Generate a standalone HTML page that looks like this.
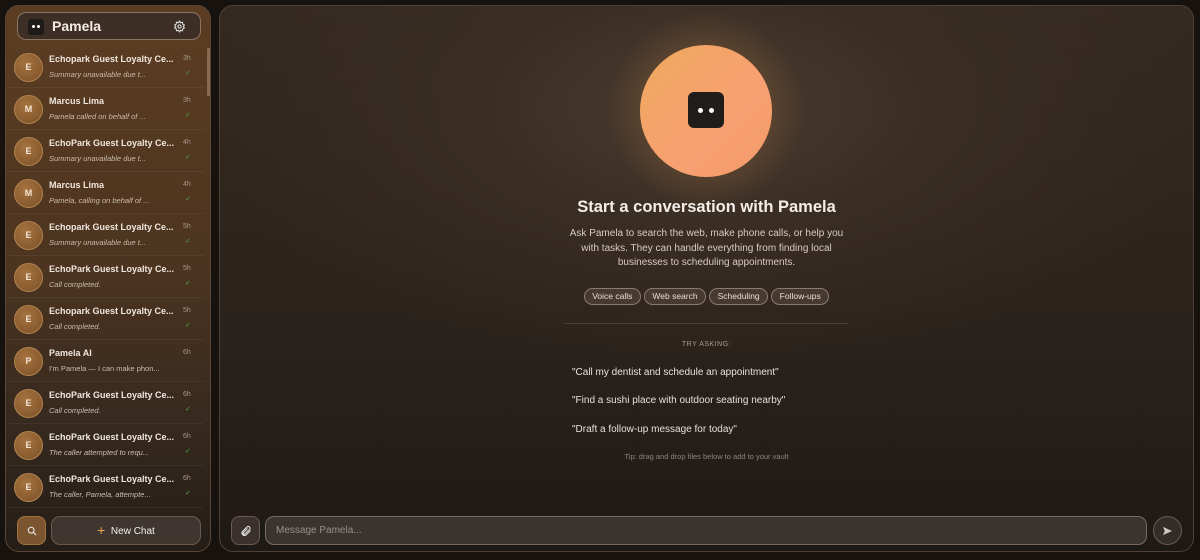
<!DOCTYPE html>
<html><head><style>
*{box-sizing:border-box;margin:0;padding:0}
body{width:1200px;height:560px;background:#17120e;font-family:"Liberation Sans",sans-serif;color:#eee;position:relative;overflow:hidden}
.side{position:absolute;left:5px;top:5px;width:206px;height:547px;border-radius:14px;border:1px solid #5a4636;background:linear-gradient(180deg,#5b3d22 0%,#4e3520 45%,#382a1f 75%,#241d18 100%);overflow:hidden}
.hdr{position:absolute;left:11px;top:6px;width:184px;height:28px;border-radius:9px;border:1px solid #8a7462;background:rgba(58,46,38,.9)}
.logo{position:absolute;left:10px;top:6px;width:16px;height:16px;border-radius:3px;background:#1e1b19}
.logo:before,.logo:after{content:"";position:absolute;top:6px;width:3px;height:3px;border-radius:50%;background:#fff}
.logo:before{left:4px}.logo:after{left:9px}
.hdr .t{position:absolute;left:34px;top:5px;font-weight:bold;font-size:14px;color:#f3ebe4}
.item{position:absolute;left:0;width:198px;height:42px;border-bottom:1px solid rgba(255,255,255,.05)}
.av{position:absolute;left:8px;top:7px;width:29px;height:29px;border-radius:50%;background:radial-gradient(circle at 40% 35%,#a7733f,#7a5028);border:1px solid #b0834e;font-size:9px;font-weight:bold;color:#f4e6d6;text-align:center;line-height:27px}
.nm{position:absolute;left:43px;top:8px;font-size:9px;font-weight:bold;color:#f0e7de;white-space:nowrap}
.tm{position:absolute;left:177px;top:9px;font-size:7px;color:#a8978a}
.sb{position:absolute;left:43px;top:24px;font-size:7.5px;font-style:italic;color:#cbbcae;white-space:nowrap}
.ck{position:absolute;left:179px;top:23px;font-size:7px;color:#4fae4a}
.scroll{position:absolute;left:201px;top:42px;width:3px;height:48px;border-radius:2px;background:#8a6a4e}
.srch{position:absolute;left:11px;top:510px;width:29px;height:29px;border-radius:8px;background:#7a5530;border:1px solid #a0723e}
.nc{position:absolute;left:45px;top:510px;width:150px;height:29px;border-radius:9px;border:1px solid #6a5a4e;background:rgba(70,60,55,.8);text-align:center;line-height:27px;font-size:10px;color:#eee}
.main{position:absolute;left:219px;top:5px;width:975px;height:547px;border-radius:14px;border:1px solid #4e4036;background:radial-gradient(ellipse 500px 260px at 486px 100px,#4a3b2e 0%,#382c23 50%,transparent 100%),linear-gradient(180deg,#352a21,#2a221c 60%,#1f1915)}
.glow{position:absolute;left:386px;top:4px;width:200px;height:200px;border-radius:50%;background:radial-gradient(circle,rgba(120,85,55,.5) 40%,rgba(90,65,45,0) 70%)}
.orb{position:absolute;left:420px;top:39px;width:132px;height:132px;border-radius:50%;background:linear-gradient(135deg,#f0a95e,#f7a071 60%,#f39a68)}
.face{position:absolute;left:48px;top:47px;width:36px;height:36px;border-radius:6px;background:#211d1b}
.face:before,.face:after{content:"";position:absolute;top:16px;width:5px;height:5px;border-radius:50%;background:#fff}
.face:before{left:10px}.face:after{left:21px}
.c{position:absolute;left:0;width:973px;text-align:center}
.chip{display:inline-block;height:17px;padding:0 7.5px;line-height:15px;border:1px solid #8a7a6e;border-radius:9px;font-size:8.5px;color:#e8ddd4;background:rgba(90,75,65,.5);margin:0 1.5px}
.sug{position:absolute;left:352px;font-size:10px;color:#e8e0d9}
.att{position:absolute;left:11px;top:510px;width:29px;height:29px;border-radius:8px;border:1px solid #6a5a50;background:rgba(70,60,55,.7)}
.inp{position:absolute;left:45px;top:510px;width:882px;height:29px;border-radius:9px;border:1px solid #7a6a5e;background:rgba(70,64,60,.7);font-size:10px;color:#9a8f88;padding:8px 10px}
.send{position:absolute;left:933px;top:510px;width:29px;height:29px;border-radius:50%;border:1px solid #6a5a50;background:rgba(60,52,48,.7)}
</style></head><body>
<div class="side">
<div class="hdr"><div class="logo"></div><div class="t">Pamela</div>
<svg style="position:absolute;left:155px;top:7px" width="13" height="13" viewBox="0 0 24 24" fill="none" stroke="#ddd" stroke-width="2"><circle cx="12" cy="12" r="3"/><path d="M12 2l2 3 3.5-1 .5 3.5 3 2-2 2.5 2 2.5-3 2-.5 3.5-3.5-1-2 3-2-3-3.5 1-.5-3.5-3-2 2-2.5-2-2.5 3-2 .5-3.5 3.5 1z"/></svg></div>
<div class="scroll"></div>
<div class="item" style="top:40px"><div class="av">E</div><div class="nm">Echopark Guest Loyalty Ce...</div><div class="tm">3h</div><div class="sb">Summary unavailable due t...</div><div class="ck">✓</div></div>
<div class="item" style="top:82px"><div class="av">M</div><div class="nm">Marcus Lima</div><div class="tm">3h</div><div class="sb">Pamela called on behalf of ...</div><div class="ck">✓</div></div>
<div class="item" style="top:124px"><div class="av">E</div><div class="nm">EchoPark Guest Loyalty Ce...</div><div class="tm">4h</div><div class="sb">Summary unavailable due t...</div><div class="ck">✓</div></div>
<div class="item" style="top:166px"><div class="av">M</div><div class="nm">Marcus Lima</div><div class="tm">4h</div><div class="sb">Pamela, calling on behalf of ...</div><div class="ck">✓</div></div>
<div class="item" style="top:208px"><div class="av">E</div><div class="nm">Echopark Guest Loyalty Ce...</div><div class="tm">5h</div><div class="sb">Summary unavailable due t...</div><div class="ck">✓</div></div>
<div class="item" style="top:250px"><div class="av">E</div><div class="nm">EchoPark Guest Loyalty Ce...</div><div class="tm">5h</div><div class="sb">Call completed.</div><div class="ck">✓</div></div>
<div class="item" style="top:292px"><div class="av">E</div><div class="nm">Echopark Guest Loyalty Ce...</div><div class="tm">5h</div><div class="sb">Call completed.</div><div class="ck">✓</div></div>
<div class="item" style="top:334px"><div class="av">P</div><div class="nm">Pamela AI</div><div class="tm">6h</div><div class="sb" style="font-style:normal">I'm Pamela — I can make phon...</div></div>
<div class="item" style="top:376px"><div class="av">E</div><div class="nm">EchoPark Guest Loyalty Ce...</div><div class="tm">6h</div><div class="sb">Call completed.</div><div class="ck">✓</div></div>
<div class="item" style="top:418px"><div class="av">E</div><div class="nm">EchoPark Guest Loyalty Ce...</div><div class="tm">6h</div><div class="sb">The caller attempted to requ...</div><div class="ck">✓</div></div>
<div class="item" style="top:460px"><div class="av">E</div><div class="nm">EchoPark Guest Loyalty Ce...</div><div class="tm">6h</div><div class="sb">The caller, Pamela, attempte...</div><div class="ck">✓</div></div>
<div class="srch"><svg style="position:absolute;left:9px;top:9px" width="10" height="10" viewBox="0 0 24 24" fill="none" stroke="#eee" stroke-width="2.5"><circle cx="10" cy="10" r="7"/><path d="M15 15l7 7"/></svg></div>
<div class="nc"><span style="color:#e8a04a;font-size:14px;vertical-align:-1px">+</span>&nbsp; New Chat</div>
</div>
<div class="main">
<div class="glow"></div>
<div class="orb"><div class="face"></div></div>
<div class="c" style="top:192px;font-size:16.5px;font-weight:bold;color:#f5eee8">Start a conversation with Pamela</div>
<div class="c" style="top:221px;font-size:10px;line-height:14.5px;color:#d8ccc2">Ask Pamela to search the web, make phone calls, or help you<br>with tasks. They can handle everything from finding local<br>businesses to scheduling appointments.</div>
<div class="c" style="top:280px"><span class="chip">Voice calls</span><span class="chip">Web search</span><span class="chip">Scheduling</span><span class="chip">Follow-ups</span></div>
<div style="position:absolute;left:344px;top:317px;width:284px;height:1px;background:#4a3d34"></div>
<div class="c" style="top:335px;font-size:7px;letter-spacing:.5px;color:#a89b90">TRY ASKING:</div>
<div class="sug" style="top:361px">"Call my dentist and schedule an appointment"</div>
<div class="sug" style="top:389px">"Find a sushi place with outdoor seating nearby"</div>
<div class="sug" style="top:418px">"Draft a follow-up message for today"</div>
<div class="c" style="top:446px;font-size:7.5px;color:#8f8379">Tip: drag and drop files below to add to your vault</div>
<div class="att"><svg style="position:absolute;left:8px;top:8px" width="12" height="12" viewBox="0 0 24 24" fill="none" stroke="#ddd" stroke-width="2.2"><path d="M21 11l-9 9a5 5 0 01-7-7l9-9a3.5 3.5 0 015 5l-9 9a2 2 0 01-3-3l8-8"/></svg></div>
<div class="inp">Message Pamela...</div>
<div class="send"><svg style="position:absolute;left:8px;top:9px" width="11" height="10" viewBox="0 0 24 22"><path d="M2 2l20 9-20 9 4-9z" fill="#cfc6c0"/></svg></div>
</div>
</body></html>
